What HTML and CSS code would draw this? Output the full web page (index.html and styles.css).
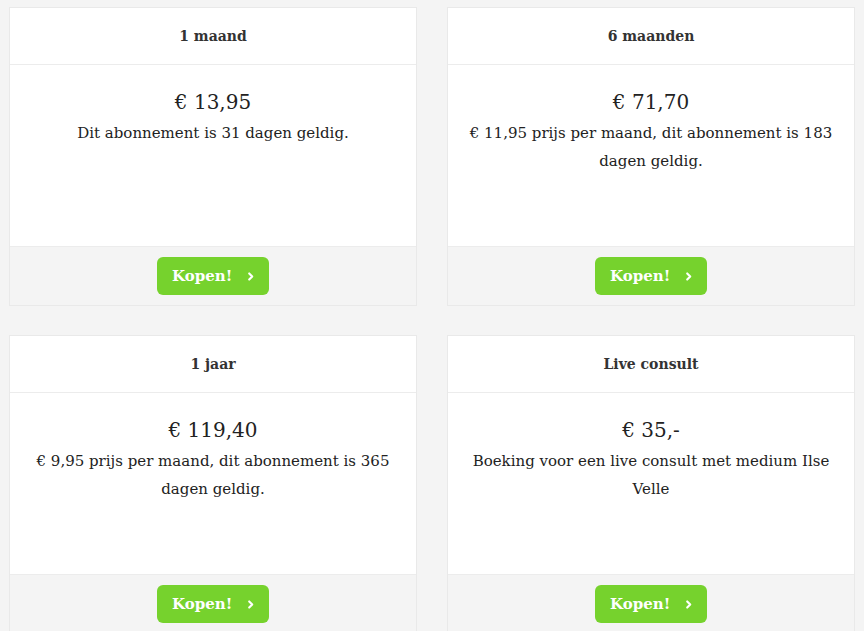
FILE: index.html
```html
<!DOCTYPE html>
<html lang="nl">
<head>
<meta charset="utf-8">
<title>Abonnementen</title>
<link rel="stylesheet" href="styles.css">
</head>
<body>
<div class="grid">
  <div class="card">
    <div class="card-head">1 maand</div>
    <div class="card-body">
      <div class="price">€ 13,95</div>
      <p class="desc">Dit abonnement is 31 dagen geldig.</p>
    </div>
    <div class="card-foot">
      <a class="btn" href="#">Kopen!<svg class="chev" viewBox="0 0 8 12" width="7" height="11"><path d="M2.5 2.5l3.5 3.5-3.5 3.5" fill="none" stroke="#fff" stroke-width="2.4" stroke-linecap="round" stroke-linejoin="round"/></svg></a>
    </div>
  </div>
  <div class="card">
    <div class="card-head">6 maanden</div>
    <div class="card-body">
      <div class="price">€ 71,70</div>
      <p class="desc">€ 11,95 prijs per maand, dit abonnement is 183 dagen geldig.</p>
    </div>
    <div class="card-foot">
      <a class="btn" href="#">Kopen!<svg class="chev" viewBox="0 0 8 12" width="7" height="11"><path d="M2.5 2.5l3.5 3.5-3.5 3.5" fill="none" stroke="#fff" stroke-width="2.4" stroke-linecap="round" stroke-linejoin="round"/></svg></a>
    </div>
  </div>
  <div class="card">
    <div class="card-head">1 jaar</div>
    <div class="card-body">
      <div class="price">€ 119,40</div>
      <p class="desc">€ 9,95 prijs per maand, dit abonnement is 365 dagen geldig.</p>
    </div>
    <div class="card-foot">
      <a class="btn" href="#">Kopen!<svg class="chev" viewBox="0 0 8 12" width="7" height="11"><path d="M2.5 2.5l3.5 3.5-3.5 3.5" fill="none" stroke="#fff" stroke-width="2.4" stroke-linecap="round" stroke-linejoin="round"/></svg></a>
    </div>
  </div>
  <div class="card">
    <div class="card-head">Live consult</div>
    <div class="card-body">
      <div class="price">€ 35,-</div>
      <p class="desc">Boeking voor een live consult met medium Ilse Velle</p>
    </div>
    <div class="card-foot">
      <a class="btn" href="#">Kopen!<svg class="chev" viewBox="0 0 8 12" width="7" height="11"><path d="M2.5 2.5l3.5 3.5-3.5 3.5" fill="none" stroke="#fff" stroke-width="2.4" stroke-linecap="round" stroke-linejoin="round"/></svg></a>
    </div>
  </div>
</div>
</body>
</html>
```
FILE: styles.css
```css
html, body {
  margin: 0;
  padding: 0;
  background: #f4f4f4;
}
body {
  font-family: "DejaVu Serif", "Liberation Serif", serif;
  color: #222;
}
.grid {
  display: grid;
  grid-template-columns: 1fr 1fr;
  column-gap: 30px;
  row-gap: 29px;
  padding: 7px 9px;
}
.card {
  background: #fff;
  border: 1px solid #e9e9e9;
  display: flex;
  flex-direction: column;
}
.card-head {
  height: 56px;
  display: flex;
  align-items: center;
  justify-content: center;
  font-weight: bold;
  font-size: 14px;
  color: #333;
  border-bottom: 1px solid #ececec;
}
.card-body {
  height: 181px;
  box-sizing: border-box;
  padding: 21px 14px 0;
  text-align: center;
}
.price {
  font-size: 20px;
  line-height: 33px;
  color: #222;
}
.desc {
  margin: 0;
  font-size: 15px;
  line-height: 28px;
  color: #222;
}
.card-foot {
  height: 58px;
  background: #f4f4f4;
  border-top: 1px solid #ececec;
  display: flex;
  align-items: center;
  justify-content: center;
}
.btn {
  display: inline-flex;
  align-items: center;
  height: 38px;
  width: 112px;
  box-sizing: border-box;
  padding: 0 0 0 15px;
  background: #76d22d;
  border-radius: 6px;
  color: #fff;
  font-weight: bold;
  font-size: 15px;
  text-decoration: none;
}
.chev {
  margin-left: 15px;
}
```
